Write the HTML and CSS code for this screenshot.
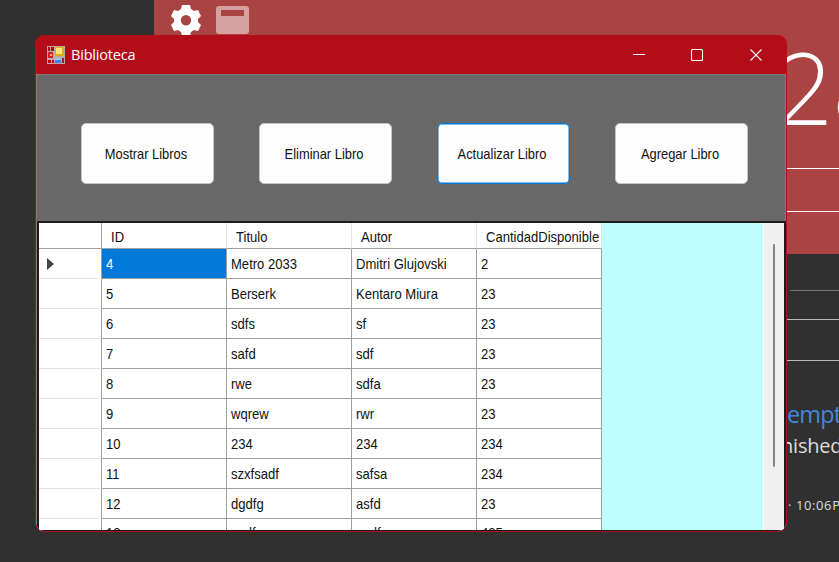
FILE: index.html
```html
<!DOCTYPE html>
<html lang="es">
<head>
<meta charset="utf-8">
<title>Biblioteca</title>
<link rel="stylesheet" href="styles.css">
</head>
<body>
<div class="desktop">
  <main class="page">
    <header class="banner">
      <div class="tools">
        <svg class="gear" width="32" height="32" viewBox="0 0 32 32"><path fill="#fff" fill-rule="evenodd" d="M12 1h8l1 4 3 2 4-1 3 6-3 3v3l3 3-3 6-4-1-3 2-1 4h-8l-1-4-3-2-4 1-3-6 3-3v-3l-3-3 3-6 4 1 3-2zM16 11a5.200 5.200 0 1 0 0 10.400a5.200 5.200 0 1 0 0-10.400z"/></svg>
        <svg width="33" height="29" viewBox="0 0 33 29"><path fill="#d6a1a0" fill-rule="evenodd" d="M3 0h27q3 0 3 3v22q0 3-3 3H3q-3 0-3-3V3Q0 0 3 0zM5 4v6h23V4z"/></svg>
      </div>
      <div class="score">28</div>
      <div class="rule"></div>
      <div class="rule second"></div>
    </header>
    <section class="details">
      <div class="line short"></div>
      <div class="line"></div>
      <div class="line last"></div>
      <div class="link">empt</div>
      <div class="state">nished</div>
      <div class="time">· 10:06P</div>
    </section>
  </main>

  <div class="window">
    <div class="titlebar">
      <svg width="18" height="18" viewBox="0 0 18 18"><path fill="#b9a9a9" d="M0 0h18v18H0z"/><path fill="#b30d1a" d="M1 1h2v4H1zM4 1h3v4H4zM1 14h3v3H1zM5 14h2v3H5zM15 12h2v5h-2z"/><path fill="#c22a22" d="M1 6h5v6H1z"/><path fill="#f4a391" d="M3 8h2v2H3z"/><path fill="#e2ac13" d="M8 1h9v9H8z"/><path fill="#fbe477" d="M9 2h6v6H9z"/><path fill="#3f83dc" d="M8 12h6v5H8z"/><path fill="#9bc8fa" d="M8 12h6v2H8z"/></svg>
      <span class="caption">Biblioteca</span>
      <svg class="controls" width="130" height="14" viewBox="0 0 130 14" fill="none" stroke="#fff" stroke-width="1.100"><path d="M0 6.500h12"/><rect x="58.500" y="1.500" width="11" height="11" rx="1"/><path d="M117.500 1.500l11 11M128.500 1.500l-11 11"/></svg>
    </div>
    <div class="toolbar">
      <button><span>Mostrar Libros</span></button>
      <button><span>Eliminar Libro</span></button>
      <button class="focused"><span>Actualizar Libro</span></button>
      <button><span>Agregar Libro</span></button>
    </div>
    <div class="gridview">
      <div class="table">
        <div class="row head"><i></i><b><span>ID</span></b><b><span>Titulo</span></b><b><span>Autor</span></b><b><span>CantidadDisponible</span></b></div>
        <div class="row"><i><svg width="7" height="12" viewBox="0 0 7 12"><path fill="#444" d="M0 0l7 6-7 6z"/></svg></i><b class="selected"><span>4</span></b><b><span>Metro 2033</span></b><b><span>Dmitri Glujovski</span></b><b><span>2</span></b></div>
        <div class="row"><i></i><b><span>5</span></b><b><span>Berserk</span></b><b><span>Kentaro Miura</span></b><b><span>23</span></b></div>
        <div class="row"><i></i><b><span>6</span></b><b><span>sdfs</span></b><b><span>sf</span></b><b><span>23</span></b></div>
        <div class="row"><i></i><b><span>7</span></b><b><span>safd</span></b><b><span>sdf</span></b><b><span>23</span></b></div>
        <div class="row"><i></i><b><span>8</span></b><b><span>rwe</span></b><b><span>sdfa</span></b><b><span>23</span></b></div>
        <div class="row"><i></i><b><span>9</span></b><b><span>wqrew</span></b><b><span>rwr</span></b><b><span>23</span></b></div>
        <div class="row"><i></i><b><span>10</span></b><b><span>234</span></b><b><span>234</span></b><b><span>234</span></b></div>
        <div class="row"><i></i><b><span>11</span></b><b><span>szxfsadf</span></b><b><span>safsa</span></b><b><span>234</span></b></div>
        <div class="row"><i></i><b><span>12</span></b><b><span>dgdfg</span></b><b><span>asfd</span></b><b><span>23</span></b></div>
        <div class="row partial"><i></i><b><span>13</span></b><b><span>asdf</span></b><b><span>asdf</span></b><b><span>435</span></b></div>
      </div>
      <div class="scrollbar"><div class="thumb"></div></div>
    </div>
  </div>
</div>
</body>
</html>
```
FILE: styles.css
```css
* { box-sizing: border-box; }
body { margin: 0; }
.desktop {
  position: relative;
  width: 839px;
  height: 562px;
  overflow: hidden;
  background: #303030;
  font-family: "Liberation Sans", sans-serif;
}

/* Page behind the window */
.page { margin-left: 154px; font-family: "Open Sans", sans-serif; white-space: nowrap; }
.banner { height: 254px; background: #a94442; overflow: hidden; color: #fff; }
.tools { display: flex; gap: 14px; height: 41px; padding: 4px 0 0 16px; }
.tools svg { flex: none; }
.tools svg + svg { margin-top: 2px; }
.score { height: 127px; padding: 0 0 0 622px; font-size: 100px; line-height: 91px; font-weight: 300; letter-spacing: -1px; }
.rule { height: 1px; background: #fff; }
.second { margin-top: 42px; }
.details { display: flex; flex-direction: column; padding-top: 36px; color: #ddd; }
.line { flex: none; height: 1px; background: #bbb; margin-bottom: 40px; }
.short { margin: 0 0 28px 636px; background: #777; }
.last { margin-bottom: 36px; }
.link { padding-left: 633px; font-size: 23.5px; line-height: 34px; letter-spacing: -.9px; color: #4389d8; }
.state { padding-left: 627px; font-size: 20px; line-height: 30px; letter-spacing: -.2px; }
.time { padding: 34px 0 0 634px; font-size: 13px; line-height: 20px; letter-spacing: .6px; }

/* Application window */
.window {
  position: absolute;
  left: 35px;
  top: 35px;
  width: 752px;
  height: 497px;
  display: flex;
  flex-direction: column;
  overflow: hidden;
  border: 1px solid #b30d1a;
  border-radius: 9px;
  background: #b30d1a;
}
.titlebar {
  flex: none;
  height: 38px;
  display: flex;
  align-items: center;
  padding: 0 23px 0 11px;
  gap: 6px;
  color: #fff;
}
.caption { font: 14.5px "Open Sans", sans-serif; letter-spacing: -.2px; padding-bottom: 2px; }
.controls { margin-left: auto; }
.toolbar {
  flex: none;
  height: 147px;
  display: flex;
  gap: 45px;
  padding: 48px 0 0 44px;
  background: #696969;
  border: 1px solid #7d7d7d;
  border-bottom: 0;
}
button {
  width: 133px;
  height: 61px;
  padding: 0 3px 0 0;
  border: 1px solid #c5c5c5;
  border-radius: 5px;
  background: #fdfdfd;
  color: #111;
  font: 15px "Liberation Sans", sans-serif;
}
.focused { border-color: #0078d7; box-shadow: inset 0 0 0 .5px #0078d7; }
button span { display: block; white-space: nowrap; transform: scaleX(.86); }

.gridview {
  flex: 1;
  display: flex;
  min-height: 0;
  overflow: hidden;
  border: 2px solid #1c1c1c;
  border-bottom-width: 1px;
  box-shadow: -1px 0 #7d7d7d;
  margin-left: 1px;
  background: #c0ffff;
}
.table { width: 563px; flex: none; }
.row { display: grid; grid-template-columns: 63px repeat(4, 125px); height: 30px; background: #fff; }
.row i, .row b {
  display: flex;
  align-items: center;
  border-right: 1px solid #a0a0a0;
  border-bottom: 1px solid #a0a0a0;
  font: 15px "Liberation Sans", sans-serif;
  color: #111;
}
.row i { border-bottom-color: #e3e3e3; padding-left: 8px; }
.row b { padding-left: 4px; }
.row span { white-space: nowrap; transform: scaleX(.87); transform-origin: left; }
.head { height: 26px; }
.head i { border-bottom-color: #a0a0a0; }
.head b { border-right-color: #e3e3e3; padding: 1px 0 0 9px; }
.partial b { padding-bottom: 2px; }
.row .selected { background: #0078d7; color: #fff; }
.scrollbar {
  width: 21px;
  flex: none;
  margin-left: auto;
  padding: 21px 0 0 9px;
  border-left: 1px solid #fff;
  background: #f0f0f0;
}
.thumb { width: 2px; height: 223px; border-radius: 1px; background: #858585; }
```
